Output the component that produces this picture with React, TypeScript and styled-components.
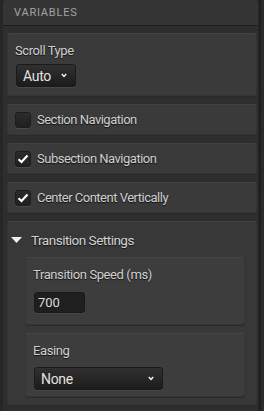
import React from "react";
import styled, { createGlobalStyle } from "styled-components";

const GlobalStyle = createGlobalStyle`
  html, body {
    margin: 0;
    padding: 0;
    background: #262626;
  }
  body {
    font-family: Roboto, "Liberation Sans", sans-serif;
  }
`;

const Page = styled.div`
  display: flex;
  height: 411px;
  width: 264px;
  background: #262626;
  overflow: hidden;
`;

const Panel = styled.div`
  margin-left: 3px;
  width: 255px;
  height: 100%;
  background: #2e2e2e;
  border-radius: 3px 3px 0 0;
  display: flex;
  flex-direction: column;
`;

const Gutter = styled.div`
  flex: 1;
  border-left: 2px solid #1f1f1f;
  margin-left: 1px;
  background: #2a2a2a;
`;

const Header = styled.div`
  height: 25px;
  line-height: 25px;
  background: #353535;
  border-bottom: 1px solid #1c1c1c;
  border-radius: 3px 3px 0 0;
  padding-left: 11px;
  font-size: 11px;
  letter-spacing: 0.8px;
  color: #a2a2a2;
`;

const Body = styled.div`
  padding: 7px 1px 0 4px;
  display: flex;
  flex-direction: column;
  gap: 8px;
`;

const Card = styled.div<{ $height: number }>`
  box-sizing: border-box;
  height: ${(p) => p.$height}px;
  background: #3a3a3a;
  border: 1px solid #353535;
  border-top-color: #424242;
  border-radius: 3px;
  box-shadow: 0 1px 0 #2a2a2a;
`;

const FieldCard = styled(Card)<{ $gap: number }>`
  padding: 9px 7px 0 7px;
  display: flex;
  flex-direction: column;
  align-items: flex-start;
  gap: ${(p) => p.$gap}px;
`;

const InnerCard = styled(FieldCard)`
  margin: 0 11px 0 17px;
  background: #3d3d3d;
  border-color: #363636;
  border-top-color: #464646;
`;

const Label = styled.div`
  font-size: 13px;
  letter-spacing: -0.4px;
  line-height: 16px;
  color: #cfcfcf;
  text-shadow: 0 1px 1px #111;
`;

const Select = styled.div<{ $width: number }>`
  width: ${(p) => p.$width}px;
  height: 23px;
  box-sizing: border-box;
  margin-left: 1px;
  padding: 0 8px 0 6px;
  display: flex;
  align-items: center;
  justify-content: space-between;
  background: linear-gradient(#303030, #1c1c1c);
  border: 1px solid #1a1a1a;
  border-radius: 3px;
  box-shadow: 0 1px 0 #474747;
  color: #e2e2e2;
  font-size: 14px;
  letter-spacing: -0.3px;
`;

const Input = styled.div`
  width: 51px;
  height: 21px;
  box-sizing: border-box;
  margin-left: 1px;
  padding-left: 3px;
  display: flex;
  align-items: center;
  background: #1f1f1f;
  border: 1px solid #1a1a1a;
  border-radius: 3px;
  box-shadow: 0 1px 0 #474747;
  color: #dcdcdc;
  font-size: 13px;
`;

const CheckRow = styled(Card)`
  display: flex;
  align-items: center;
  gap: 6px;
  padding-left: 7px;
`;

const Box = styled.div`
  width: 16px;
  height: 16px;
  box-sizing: border-box;
  border-radius: 3px;
  border: 1px solid #1c1c1c;
  background: linear-gradient(#2c2c2c, #1f1f1f);
  box-shadow: 0 1px 0 #4a4a4a;
  display: flex;
  align-items: center;
  justify-content: center;
`;

const CheckText = styled.span`
  font-size: 13px;
  letter-spacing: -0.5px;
  color: #cfcfcf;
  text-shadow: 0 1px 1px #111;
`;

const Section = styled(Card)`
  display: flex;
  flex-direction: column;
  gap: 8px;
  background: #383838;
`;

const SectionHead = styled.div`
  display: flex;
  align-items: center;
  gap: 9px;
  height: 18px;
  padding: 9px 0 0 3px;
  font-size: 13.5px;
  letter-spacing: -0.5px;
  color: #d2d2d2;
  text-shadow: 0 1px 1px #111;
`;

const Chevron = () => (
  <svg width="6" height="5" viewBox="0 0 6 5">
    <path d="M0.8 1 L3 3.4 L5.2 1" stroke="#f2f2f2" strokeWidth="1.5" fill="none" />
  </svg>
);

const Tick = () => (
  <svg width="12" height="10" viewBox="0 0 12 10">
    <path d="M1.5 5.2 L4.5 8 L10.5 1.5" stroke="#ffffff" strokeWidth="2.2" fill="none" />
  </svg>
);

const Triangle = () => (
  <svg width="11" height="6" viewBox="0 0 11 6">
    <path d="M0 0 H11 L5.5 6 Z" fill="#f0f0f0" />
  </svg>
);

const Check = ({ label, checked }: { label: string; checked: boolean }) => (
  <CheckRow $height={31}>
    <Box>{checked && <Tick />}</Box>
    <CheckText>{label}</CheckText>
  </CheckRow>
);

export default function App() {
  return (
    <Page>
      <GlobalStyle />
      <Panel>
        <Header>VARIABLES</Header>
        <Body>
          <FieldCard $height={63} $gap={5}>
            <Label>Scroll Type</Label>
            <Select $width={60}>
              <span>Auto</span>
              <Chevron />
            </Select>
          </FieldCard>

          <Check label="Section Navigation" checked={false} />
          <Check label="Subsection Navigation" checked />
          <Check label="Center Content Vertically" checked />

          <Section $height={184}>
            <SectionHead>
              <Triangle />
              <span>Transition Settings</span>
            </SectionHead>
            <InnerCard $height={68} $gap={9}>
              <Label>Transition Speed (ms)</Label>
              <Input>700</Input>
            </InnerCard>
            <InnerCard $height={64} $gap={8}>
              <Label>Easing</Label>
              <Select $width={129}>
                <span>None</span>
                <Chevron />
              </Select>
            </InnerCard>
          </Section>
        </Body>
      </Panel>
      <Gutter />
    </Page>
  );
}
